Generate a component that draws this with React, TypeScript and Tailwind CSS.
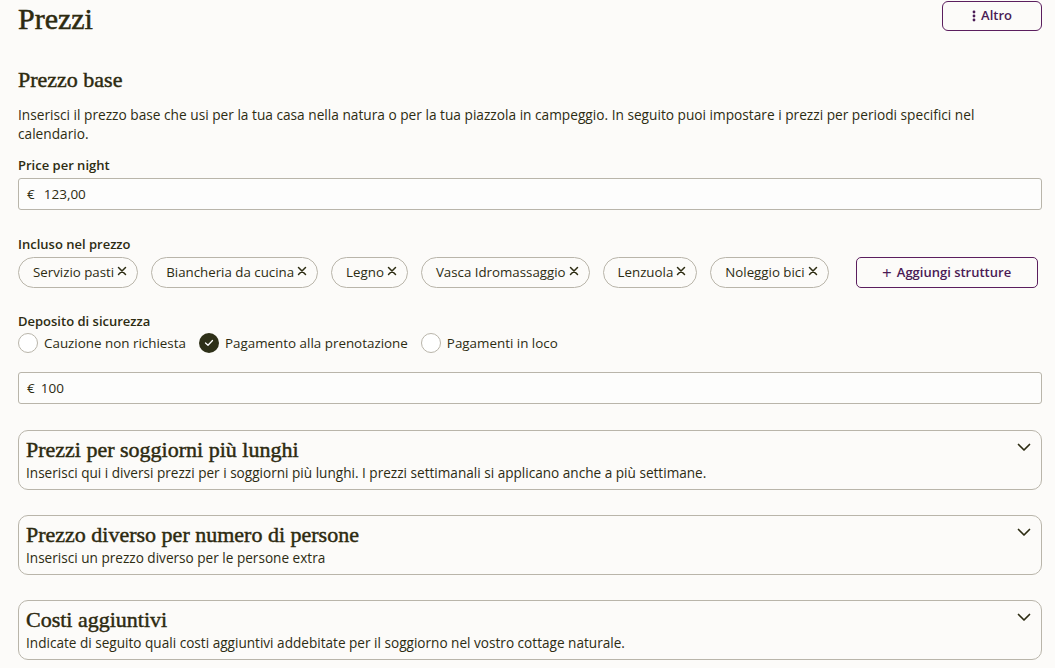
import React from "react";

const sans = { fontFamily: '"Open Sans", "Noto Sans", sans-serif' };
const serif = { fontFamily: '"Liberation Serif", "DejaVu Serif", serif' };

function XIcon() {
  return (
    <svg width="10" height="10" viewBox="0 0 10 10" className="mb-[4px] shrink-0">
      <path d="M1.5 1.5 L8.5 8.5 M8.5 1.5 L1.5 8.5" stroke="#2d2c12" strokeWidth="1.5" strokeLinecap="round" />
    </svg>
  );
}

function Chevron() {
  return (
    <svg width="14" height="9" viewBox="0 0 14 9">
      <path d="M1.5 1.5 L7 7 L12.5 1.5" fill="none" stroke="#2d2c12" strokeWidth="1.7" strokeLinecap="round" strokeLinejoin="round" />
    </svg>
  );
}

function Chip({ label }: { label: string }) {
  return (
    <div className="flex h-[31px] shrink-0 items-center gap-[3px] whitespace-nowrap rounded-full border border-[#b9b5aa] pl-[14px] pr-[10px] text-[13.3px] text-[#2d2c12]">
      <span>{label}</span>
      <XIcon />
    </div>
  );
}

function Radio({ label, checked }: { label: string; checked?: boolean }) {
  return (
    <div className="flex items-center gap-[6px]">
      {checked ? (
        <div className="flex h-[20px] w-[20px] items-center justify-center rounded-full bg-[#2e3018]">
          <svg width="10" height="8" viewBox="0 0 10 8">
            <path d="M1.5 4 L4 6.3 L8.5 1.5" fill="none" stroke="#fff" strokeWidth="1.3" strokeLinecap="round" strokeLinejoin="round" />
          </svg>
        </div>
      ) : (
        <div className="h-[20px] w-[20px] rounded-full border border-[#b9b5aa] bg-white" />
      )}
      <span className="text-[13.4px] text-[#2d2c12]">{label}</span>
    </div>
  );
}

function Accordion({ title, desc }: { title: string; desc: string }) {
  return (
    <div className="flex h-[60px] items-start justify-between rounded-[10px] border border-[#b9b5aa] pl-[7px] pr-[10px] pt-[5px]">
      <div className="flex flex-col">
        <div className="text-[22px] leading-[28px] text-[#2d2a10] [-webkit-text-stroke:0.45px_#2d2a10]" style={serif}>{title}</div>
        <div className="text-[13.6px] leading-[18px] text-[#2d2c12]">{desc}</div>
      </div>
      <div className="pt-[7px]">
        <Chevron />
      </div>
    </div>
  );
}

export default function App() {
  const chips = ["Servizio pasti", "Biancheria da cucina", "Legno", "Vasca Idromassaggio", "Lenzuola", "Noleggio bici"];
  return (
    <div className="min-h-[668px] w-[1055px] bg-[#fcfbf9] pl-[18px] pr-[13px] text-[#2d2c12]" style={sans}>
      <div className="flex items-start justify-between pt-[1px]">
        <h1 className="pt-[1px] text-[30px] leading-[34px] text-[#2d2a10] [-webkit-text-stroke:0.5px_#2d2a10]" style={serif}>Prezzi</h1>
        <button className="flex h-[30px] w-[100px] items-center justify-center gap-[5px] rounded-[6px] border border-[#5b1e5e] text-[13px] font-semibold text-[#4a1a55]">
          <svg width="4" height="12" viewBox="0 0 4 12">
            <circle cx="2" cy="2" r="1.4" fill="#4a1a55" />
            <circle cx="2" cy="6" r="1.4" fill="#4a1a55" />
            <circle cx="2" cy="10" r="1.4" fill="#4a1a55" />
          </svg>
          Altro
        </button>
      </div>

      <h2 className="mt-[30px] text-[22px] leading-[28px] text-[#2d2a10] [-webkit-text-stroke:0.45px_#2d2a10]" style={serif}>Prezzo base</h2>
      <p className="mt-[11px] text-[13.7px] leading-[19px]">
        Inserisci il prezzo base che usi per la tua casa nella natura o per la tua piazzola in campeggio. In seguito puoi impostare i prezzi per periodi specifici nel calendario.
      </p>

      <div className="mt-[13px] text-[13px] leading-[18px] font-semibold">Price per night</div>
      <div className="mt-[4px] flex h-[32px] items-center gap-[9px] rounded-[3px] border border-[#b9b5aa] bg-[#fdfdfc] pl-[8px] text-[13.5px]">
        <span>€</span>
        <span>123,00</span>
      </div>

      <div className="mt-[25px] text-[13px] leading-[18px] font-semibold">Incluso nel prezzo</div>
      <div className="mt-[4px] flex items-center">
        <div className="flex gap-[13px]">
          {chips.map((c) => (
            <Chip key={c} label={c} />
          ))}
        </div>
        <button className="ml-[27px] flex h-[31px] w-[182px] shrink-0 items-center justify-center gap-[5px] whitespace-nowrap rounded-[5px] border border-[#5b1e5e] text-[13px] font-semibold text-[#4a1a55]">
          <span className="text-[17px] font-normal leading-none">+</span>
          Aggiungi strutture
        </button>
      </div>

      <div className="mt-[24px] text-[13px] leading-[18px] font-semibold">Deposito di sicurezza</div>
      <div className="mt-[3px] flex items-center gap-[13px]">
        <Radio label="Cauzione non richiesta" />
        <Radio label="Pagamento alla prenotazione" checked />
        <Radio label="Pagamenti in loco" />
      </div>

      <div className="mt-[19px] flex h-[32px] items-center gap-[6px] rounded-[3px] border border-[#b9b5aa] bg-[#fdfdfc] pl-[8px] text-[13.5px]">
        <span>€</span>
        <span>100</span>
      </div>

      <div className="mt-[26px] flex flex-col gap-[25px] pb-[8px]">
        <Accordion title="Prezzi per soggiorni più lunghi" desc="Inserisci qui i diversi prezzi per i soggiorni più lunghi. I prezzi settimanali si applicano anche a più settimane." />
        <Accordion title="Prezzo diverso per numero di persone" desc="Inserisci un prezzo diverso per le persone extra" />
        <Accordion title="Costi aggiuntivi" desc="Indicate di seguito quali costi aggiuntivi addebitate per il soggiorno nel vostro cottage naturale." />
      </div>
    </div>
  );
}
